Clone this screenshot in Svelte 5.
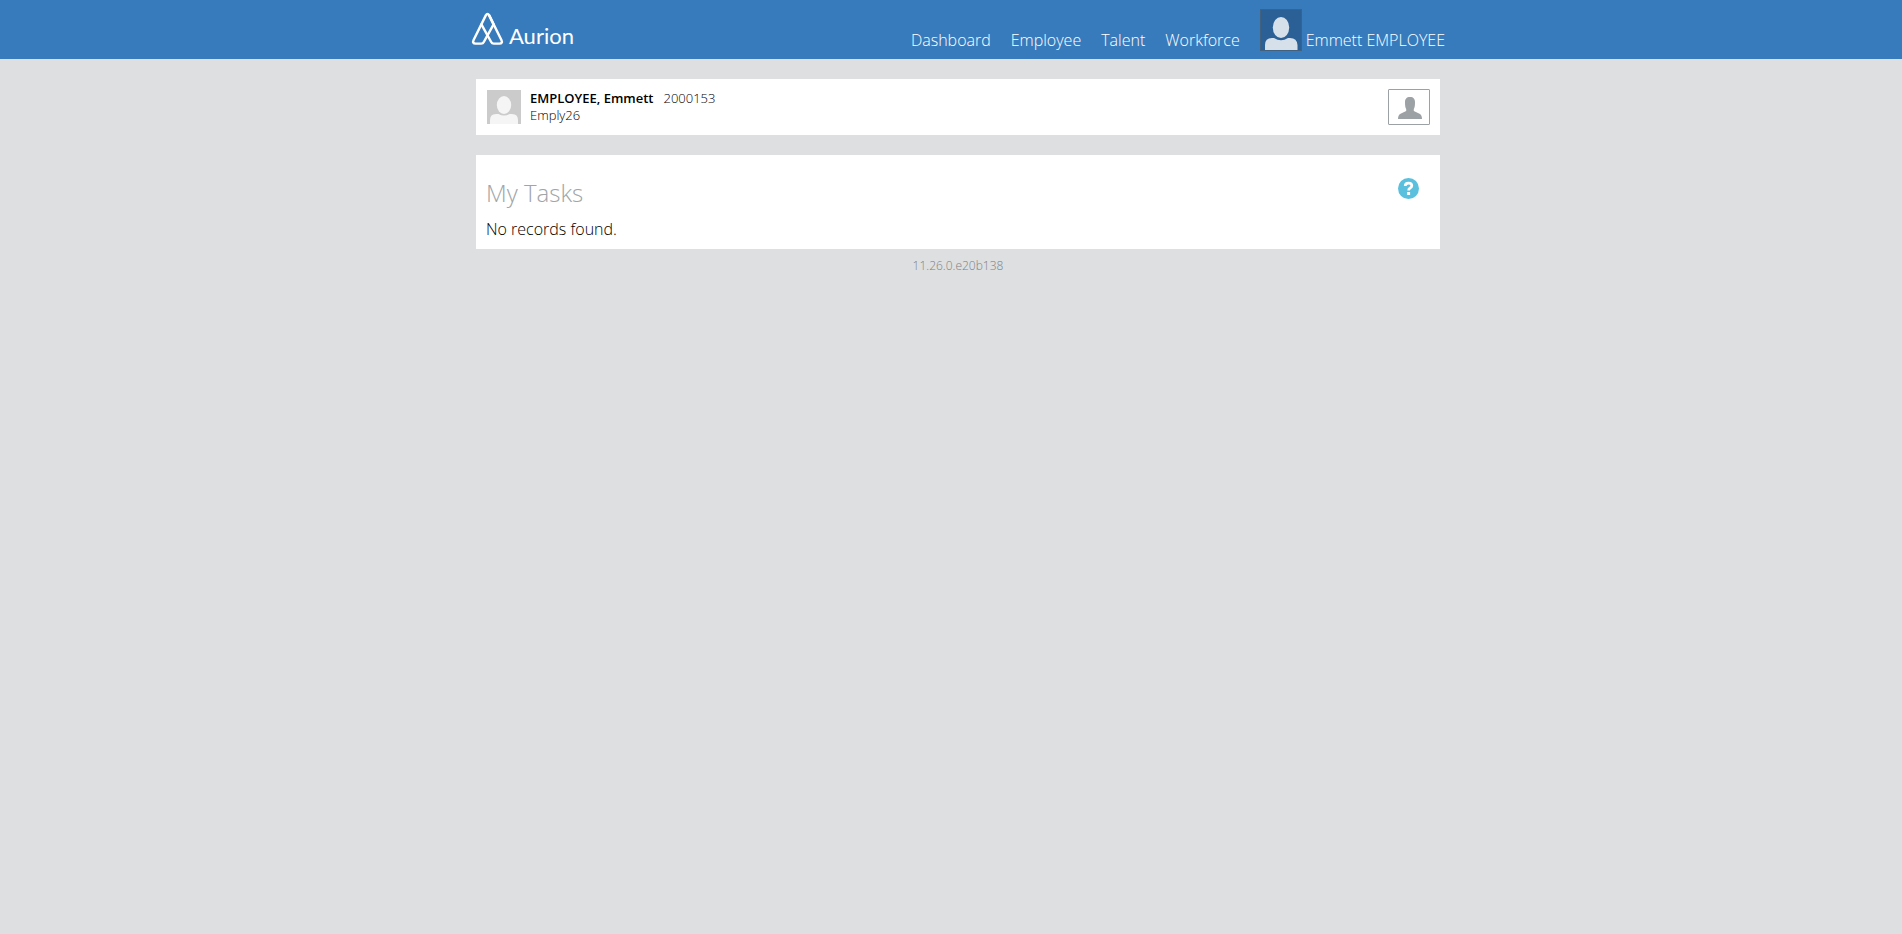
<script>
  const links = ['Dashboard', 'Employee', 'Talent', 'Workforce'];
</script>

<header>
  <div class="bar">
    <a class="logo" href="#home">
      <svg width="34" height="34" viewBox="0 0 34 34" fill="none" stroke="#fff" stroke-width="2.4" stroke-linejoin="round" stroke-linecap="round" aria-hidden="true">
        <path d="M14.8 3.4 2.6 28Q1 31.6 4.6 31.6H10.2Q12 31.6 12.8 30L22.6 12.4 18.2 3.4Q16.5 .6 14.8 3.4Z" />
        <path d="M10.4 12.4 20.2 30Q21 31.6 22.8 31.6H28.4Q32 31.6 30.4 28L18.2 3.4" />
      </svg>
      <span>Aurion</span>
    </a>
    <nav>
      {#each links as link}
        <a href="#{link.toLowerCase()}">{link}</a>
      {/each}
      <a class="user" href="#profile">
        <svg class="portrait" width="42" height="42" viewBox="0 0 42 42" aria-hidden="true">
          <rect x=".5" y=".5" width="41" height="41" fill="#2b6096" stroke="#41617f" />
          <ellipse cx="21" cy="18.5" rx="8.2" ry="10.5" fill="#d5e0eb" />
          <path d="M5 41V36Q5 29 12 29H14Q21 33.5 28 29H30Q37 29 37.5 36V41Z" fill="#d5e0eb" />
        </svg>
        <span>Emmett EMPLOYEE</span>
      </a>
    </nav>
  </div>
</header>

<main>
  <section class="card person">
    <svg width="34" height="34" viewBox="0 0 34 34" aria-hidden="true">
      <rect width="34" height="34" fill="#cbcbcb" />
      <ellipse cx="17" cy="15" rx="7.2" ry="9" fill="#f5f5f5" />
      <path d="M3 34V30Q3 24 9 24H11.5Q17 27 22.5 24H25Q31 24 31 30V34Z" fill="#f5f5f5" />
    </svg>
    <div class="details">
      <div><strong>EMPLOYEE, Emmett</strong><span class="number">2000153</span></div>
      <div>Emply26</div>
    </div>
    <button class="profile" aria-label="Employee profile">
      <svg width="24" height="22" viewBox="0 0 24 22" fill="#9ba1a5" aria-hidden="true">
        <path d="M12 0C15.5 0 17 2 17 5.2 17 9 16.6 10.5 15.8 12V14L21.5 16.8Q24 18 24 22H0Q0 18 2.5 16.8L8.2 14V12C7.4 10.5 7 9 7 5.2 7 2 8.5 0 12 0Z" />
      </svg>
    </button>
  </section>

  <section class="card tasks">
    <div class="heading">
      <h1>My Tasks</h1>
      <button class="help" aria-label="Help">
        <svg width="21" height="21" viewBox="0 0 21 21" aria-hidden="true">
          <circle cx="10.5" cy="10.5" r="10.5" fill="#5bc0de" />
          <path d="M7.2 8.1Q7.2 5.2 10.5 5.2 13.8 5.2 13.8 7.8 13.8 9.2 12.2 10 10.6 10.8 10.6 12.6" fill="none" stroke="#fff" stroke-width="2.7" />
          <rect x="9.1" y="14" width="3" height="3" fill="#fff" />
        </svg>
      </button>
    </div>
    <p>No records found.</p>
  </section>

  <footer>11.26.0.e20b138</footer>
</main>

<style>
  :global(body) {
    margin: 0;
    background: #dedfe1;
    font-family: "Open Sans", sans-serif;
    font-weight: 300;
    color: #000;
  }
  header {
    background: #387bbc;
    padding-left: 14px;
  }
  .bar {
    box-sizing: border-box;
    max-width: 974px;
    min-height: 59px;
    margin: 0 auto;
    display: flex;
    align-items: flex-start;
    justify-content: space-between;
  }
  header a {
    color: #fff;
    text-decoration: none;
  }
  .logo {
    display: flex;
    align-items: flex-end;
    gap: 4px;
    padding-top: 12px;
  }
  .logo span {
    font: 400 22px/20px Lato, sans-serif;
  }
  nav {
    display: flex;
    align-items: flex-end;
    gap: 20px;
    padding-top: 9px;
    font-size: 16px;
    line-height: 22px;
  }
  .user {
    display: flex;
    align-items: flex-end;
    gap: 4px;
  }
  .portrait {
    display: block;
  }
  main {
    max-width: 964px;
    margin: 0 auto;
    padding: 20px 0 0 14px;
  }
  .card {
    background: #fff;
    margin-bottom: 20px;
  }
  .person {
    display: flex;
    align-items: center;
    padding: 10px 10px 10px 11px;
    font-size: 13px;
    line-height: 17px;
  }
  .details {
    flex: 1;
    padding-left: 9px;
  }
  strong {
    font-weight: 600;
  }
  .number {
    padding-left: 10px;
  }
  button {
    padding: 0;
    border: 0;
    background: none;
    display: flex;
    cursor: pointer;
  }
  .profile {
    width: 42px;
    height: 36px;
    border: 1px solid #9ba1a5;
    border-radius: 1px;
    align-items: center;
    justify-content: center;
    padding: 1px 0 0 1px;
  }
  .tasks {
    padding: 20px 10px 9px;
    margin-bottom: 8px;
  }
  .heading {
    display: flex;
    justify-content: space-between;
    align-items: flex-start;
  }
  h1 {
    margin: 0;
    font-size: 24px;
    line-height: 35px;
    font-weight: 300;
    color: #a0a5a8;
  }
  .help {
    margin: 3px 11px 0 0;
  }
  p {
    margin: 8px 0 0;
    font-size: 16px;
    line-height: 22px;
  }
  footer {
    text-align: center;
    font-size: 12px;
    line-height: 17px;
    color: #7c8286;
  }
</style>
